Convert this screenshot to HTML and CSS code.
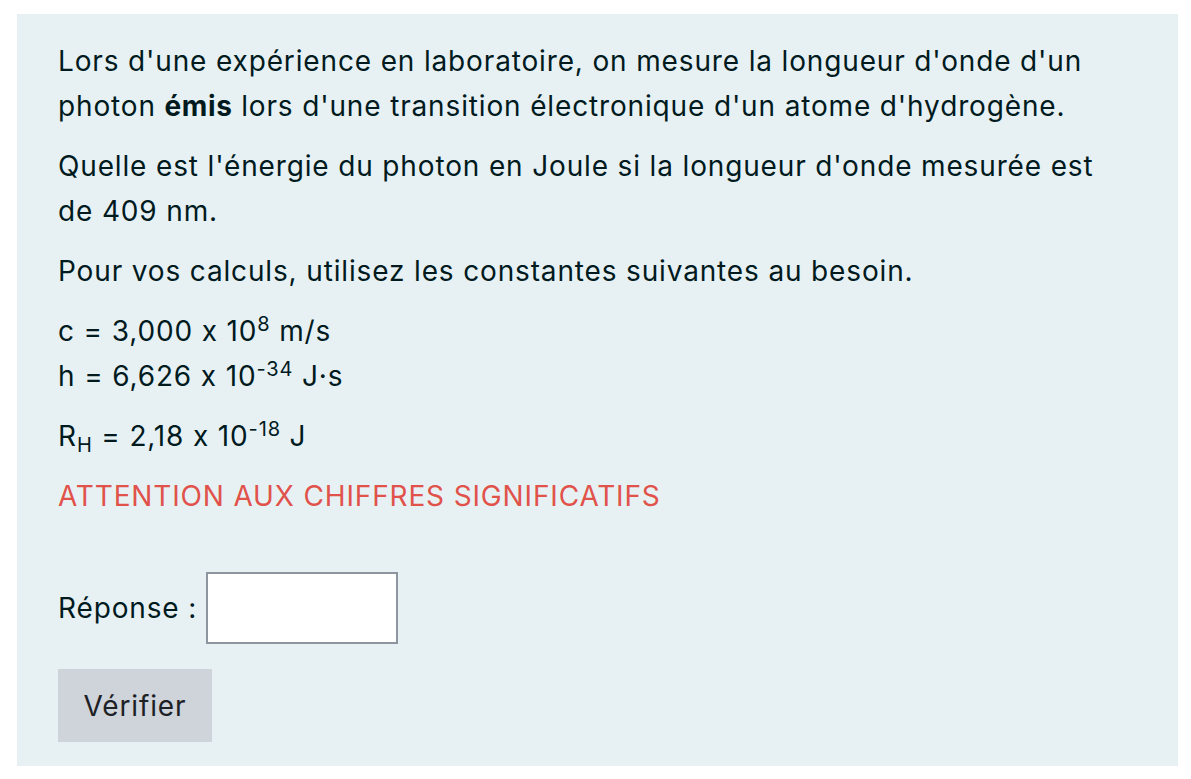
FILE: index.html
```html
<!DOCTYPE html>
<html lang="fr">
<head>
<meta charset="utf-8">
<title>Question</title>
<link rel="stylesheet" href="styles.css">
</head>
<body>
<div class="formulation">
  <p class="para">Lors d'une expérience en laboratoire, on mesure la longueur d'onde d'un photon <strong class="bold">émis</strong> lors d'une transition électronique d'un atome d'hydrogène.</p>
  <p class="para">Quelle est l'énergie du photon en Joule si la longueur d'onde mesurée est de 409 nm.</p>
  <p class="para">Pour vos calculs, utilisez les constantes suivantes au besoin.</p>
  <p class="para">c = 3,000 x 10<sup class="sup">8</sup> m/s<br>h = 6,626 x 10<sup class="sup">-34</sup> J·s</p>
  <p class="para">R<sub class="sub">H</sub> = 2,18 x 10<sup class="sup">-18</sup> J</p>
  <p class="para warn">ATTENTION AUX CHIFFRES SIGNIFICATIFS</p>
  <div class="answer">
    <label class="answer-label" for="rep">Réponse :</label>
    <input class="answer-input" id="rep" type="text">
  </div>
  <button class="check-btn" type="button">Vérifier</button>
</div>
</body>
</html>
```

FILE: styles.css
```css
html, body {
  margin: 0;
  padding: 0;
  background: #ffffff;
}
body {
  padding: 14px 13px 13px 17px;
  font-family: Inter, "Noto Sans", "Liberation Sans", sans-serif;
  font-size: 28px;
  letter-spacing: 0.85px;
  line-height: 45px;
  color: #001a1e;
  font-feature-settings: "calt" 0;
}
.formulation {
  background: #e7f1f4;
  padding: 25px 60px 24px 41px;
  height: 752px;
  box-sizing: border-box;
}
.para {
  margin: 0 0 15px 0;
}
.bold {
  font-weight: 700;
  letter-spacing: 0.6px;
}
.sup {
  font-size: 20px;
  line-height: 0;
  vertical-align: baseline;
  position: relative;
  top: -10px;
}
.sub {
  font-size: 20px;
  line-height: 0;
  vertical-align: baseline;
  position: relative;
  top: 6px;
}
.warn {
  color: #e0524a;
}
.answer {
  display: flex;
  align-items: center;
  gap: 9px;
  margin-top: 53px;
}
.answer-label {
  line-height: 45px;
}
.answer-input {
  width: 192px;
  height: 72px;
  box-sizing: border-box;
  border: 2px solid #8f959e;
  background: #ffffff;
  margin: 0;
  font: inherit;
}
.check-btn {
  display: block;
  margin-top: 25px;
  width: 154px;
  height: 73px;
  border: none;
  background: #ced4da;
  color: #1d2125;
  font-family: inherit;
  font-size: 28px;
  letter-spacing: 0.85px;
  font-feature-settings: "calt" 0;
  padding: 0;
}
```
